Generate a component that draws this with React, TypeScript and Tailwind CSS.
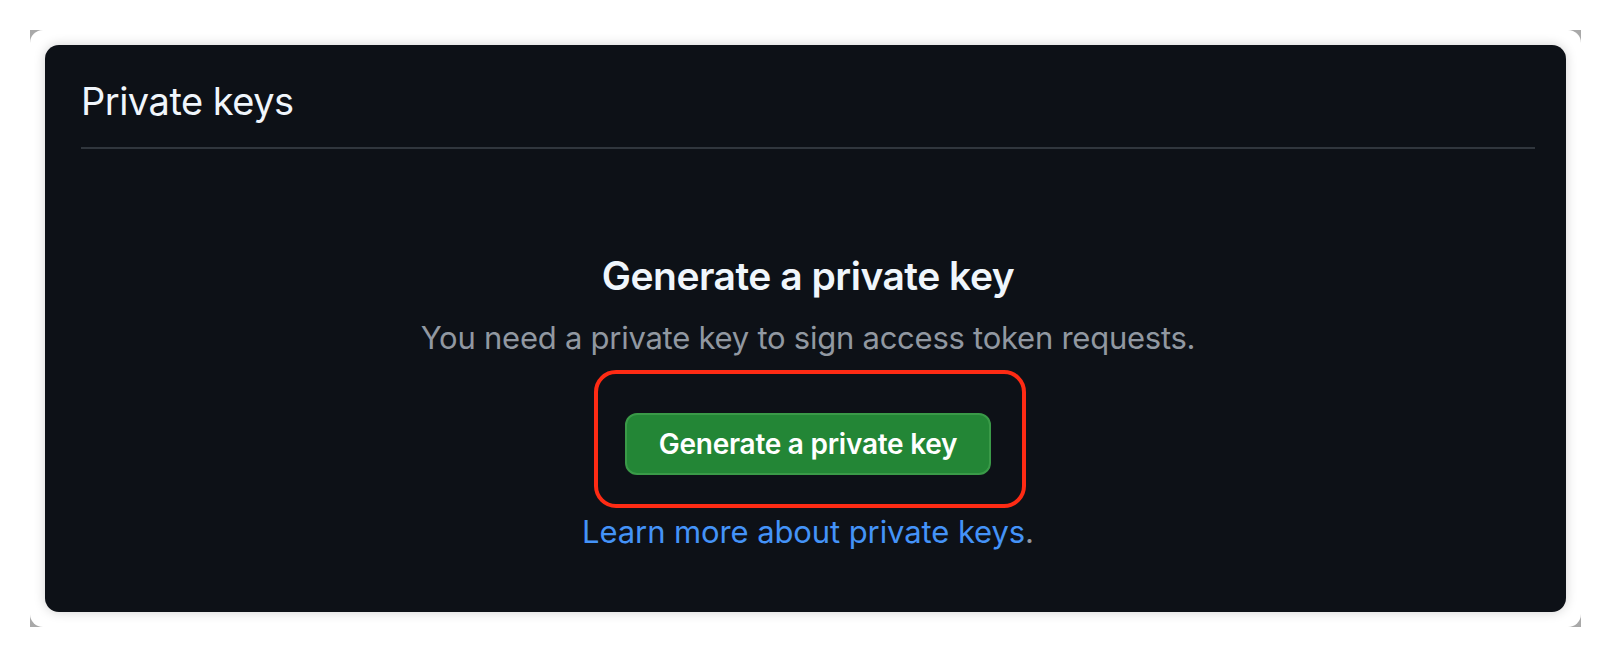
export default function App() {
  return (
    <div className="w-[1611px] h-[657px] bg-white p-[30px] font-['Inter','Liberation_Sans',sans-serif]">
      <div className="h-full w-full bg-[#a9a9a9]">
        <div className="h-full w-full rounded-[13px] bg-white p-[15px]">
          <div className="h-full w-full rounded-[14px] bg-[#0d1117] pl-[36px] pr-[31px] pt-[31px] shadow-[0_0_12px_rgba(0,0,0,0.18)]">
            {/* header */}
            <div className="border-b-2 border-[#30363d] pb-[21px]">
              <h2 className="text-[38px] leading-[50px] font-normal tracking-[-0.5px] text-[#f0f6fc]">Private keys</h2>
            </div>

            {/* blank state */}
            <div className="flex flex-col items-center pt-[102px] text-center">
              <h3 className="text-[39px] leading-[50px] font-semibold tracking-[-0.5px] text-[#f0f6fc]">Generate a private key</h3>
              <p className="mt-[17px] text-[31px] leading-[40px] tracking-[-0.25px] text-[#9198a1]">
                You need a private key to sign access token requests.
              </p>
              <div className="relative mt-[55px]">
                <button className="h-[62px] rounded-[12px] border-2 border-[#3a9a48] bg-[#238636] px-[32px] text-[28px] font-semibold tracking-[-0.25px] text-white">
                  Generate a private key
                </button>
                <div className="pointer-events-none absolute -left-[31px] -right-[35px] -top-[43px] -bottom-[33px] rounded-[22px] border-4 border-[#fe2b14]" />
              </div>
              <p className="mt-[37px] text-[31px] leading-[40px] tracking-[-0.1px] text-[#9198a1]">
                <a className="text-[#4493f8]" href="#">Learn more about private keys</a>.
              </p>
            </div>
          </div>
        </div>
      </div>
    </div>
  );
}
